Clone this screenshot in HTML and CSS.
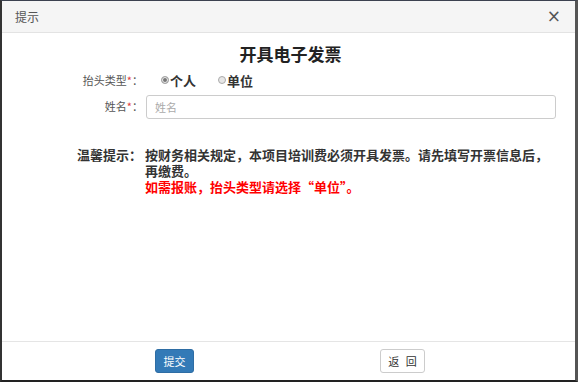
FILE: index.html
```html
<!DOCTYPE html>
<html>
<head>
	<meta charset="utf-8">
	<title>提示</title>
	<link rel="stylesheet" href="styles.css">
</head>
<body>
	<div class="dialog">
		<div class="dialog_head">
			<span class="head_title">提示</span>
			<span class="head_close">×</span>
		</div>
		<div class="dialog_body">
			<h2 class="invoice_title">开具电子发票</h2>
			<div class="form_row">
				<label class="form_label">抬头类型<i>*</i>：</label>
				<div class="form_field radios">
					<label class="radio"><span class="dot checked"></span>个人</label>
					<label class="radio"><span class="dot"></span>单位</label>
				</div>
			</div>
			<div class="form_row">
				<label class="form_label">姓名<i>*</i>：</label>
				<div class="form_field">
					<input type="text" class="name_input" placeholder="姓名">
				</div>
			</div>
			<div class="notice">
				<div class="notice_label">温馨提示：</div>
				<div class="notice_text">
					<p>按财务相关规定，本项目培训费必须开具发票。请先填写开票信息后，再缴费。</p>
					<p class="red">如需报账，抬头类型请选择“单位”。</p>
				</div>
			</div>
		</div>
		<div class="dialog_foot">
			<button class="btn btn_primary">提交</button>
			<button class="btn btn_default">返&nbsp;回</button>
		</div>
	</div>
</body>
</html>
```
FILE: styles.css
```css
*{
	margin: 0px;
	padding: 0px;
	box-sizing: border-box;
}
body
{
	width: 578px;
	height: 382px;
	font-family: "Noto Sans CJK SC", "Liberation Sans", sans-serif;
	color: #333;
	background-color: #fff;
}
.dialog
{
	display: flex;
	flex-direction: column;
	width: 578px;
	height: 382px;
	border-top: 1px solid #3c4250;
	border-left: 2px solid #333;
	border-right: 3px solid #555;
	border-bottom: 2px solid #222;
}
.dialog_head
{
	display: flex;
	justify-content: space-between;
	align-items: center;
	height: 32px;
	padding: 0px 14px 0px 13px;
	background-color: #f5f5f5;
	border-bottom: 1px solid #e3e3e3;
}
.head_title
{
	font-size: 12px;
	color: #555;
}
.head_close
{
	font-size: 17px;
	color: #555;
	font-family: "DejaVu Sans", sans-serif;
	line-height: 1;
}
.dialog_body
{
	flex: 1;
	padding-top: 8px;
}
.invoice_title
{
	text-align: center;
	font-size: 17px;
	font-weight: bold;
	color: #222;
	line-height: 26px;
	padding-left: 4px;
}
.form_row
{
	display: flex;
	align-items: center;
	height: 26px;
}
.form_label
{
	width: 141px;
	text-align: right;
	font-size: 11px;
	color: #555;
}
.form_label i
{
	font-style: normal;
	color: #e04040;
}
.form_field
{
	flex: 1;
	padding-left: 3px;
	padding-right: 19px;
}
.radios
{
	display: flex;
	padding-left: 18px;
}
.radio
{
	display: flex;
	align-items: center;
	font-size: 13px;
	font-weight: bold;
	color: #333;
	width: 57px;
}
.dot
{
	width: 8px;
	height: 8px;
	border-radius: 50%;
	border: 1px solid #aaa;
	background-color: #e6e6e6;
	margin-right: 1px;
}
.dot.checked
{
	background-color: #777;
	box-shadow: inset 0 0 0 1px #eee;
}
.name_input
{
	width: 100%;
	height: 24px;
	margin-top: 1px;
	border: 1px solid #ccc;
	border-radius: 3px;
	padding-left: 8px;
	font-size: 11px;
	font-family: "Noto Sans CJK SC", sans-serif;
}
.name_input::placeholder
{
	color: #aaa;
}
.notice
{
	display: flex;
	margin-top: 28px;
	padding-left: 75px;
	font-size: 13px;
	font-weight: bold;
	line-height: 16px;
	color: #333;
}
.notice_label
{
	width: 68px;
}
.notice_text
{
	width: 408px;
}
.red
{
	color: #f00;
}
.dialog_foot
{
	display: flex;
	align-items: center;
	height: 39px;
	padding-left: 153px;
	border-top: 1px solid #e5e5e5;
}
.btn
{
	height: 24px;
	font-size: 11px;
	border-radius: 3px;
	font-family: "Noto Sans CJK SC", sans-serif;
}
.btn_primary
{
	width: 39px;
	background-color: #337ab7;
	border: 1px solid #2e6da4;
	color: #fff;
}
.btn_default
{
	width: 45px;
	margin-left: 186px;
	background-color: #fff;
	border: 1px solid #ccc;
	color: #333;
	letter-spacing: 2px;
	padding-left: 2px;
}
```
